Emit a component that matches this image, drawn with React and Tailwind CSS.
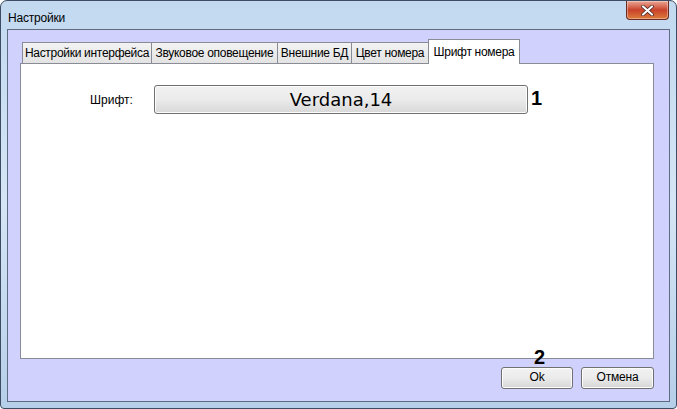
import React from 'react';

const tabs = [
  { label: 'Настройки интерфейса', w: 'w-[130px]' },
  { label: 'Звуковое оповещение', w: 'w-[127px]' },
  { label: 'Внешние БД', w: 'w-[75px]' },
  { label: 'Цвет номера', w: 'w-[78px]' },
];

const font = { fontFamily: '"Liberation Sans", Arial, sans-serif' };

const WinButton = ({ children, w }) => (
  <button
    className={`${w} h-[22px] rounded-[3px] border border-[#707070] bg-gradient-to-b from-[#f2f2f2] via-[#ebebeb] to-[#d6d6d6] text-[12px] text-black leading-none tracking-[-0.2px] shadow-[inset_0_0_0_1px_#fcfcfc] pb-[2px]`}
  >
    {children}
  </button>
);

export default function App() {
  return (
    <div className="w-[677px] h-[409px] overflow-hidden bg-white" style={font}>
      {/* window frame */}
      <div className="w-full h-full rounded-t-[7px] rounded-b-[4px] border border-[#3c4d63] bg-gradient-to-b from-[#c2d9f0] via-[#d5e5f6] to-[#b6cfe9] flex flex-col px-[6px] pb-[6px]">
        {/* title bar */}
        <div className="h-[28px] flex items-start justify-between shrink-0">
          <span className="mt-[8px] ml-[1px] text-[12px] text-black tracking-[-0.2px]">Настройки</span>
          <div className="mr-[1px] w-[43px] h-[19px] rounded-b-[4px] border border-[#6b2a22] border-t-0 bg-gradient-to-b from-[#eaa595] via-[#c8412a] to-[#dc7a3c] flex items-center justify-center shadow-[inset_0_0_0_1px_rgba(255,255,255,0.35)]">
            <svg width="13" height="11" viewBox="0 0 13 11">
              <path d="M2 1.5 L11 9.5 M11 1.5 L2 9.5" stroke="#3a2020" strokeWidth="3.6" strokeLinecap="round" />
              <path d="M2 1.5 L11 9.5 M11 1.5 L2 9.5" stroke="#ffffff" strokeWidth="2.2" strokeLinecap="round" />
            </svg>
          </div>
        </div>

        {/* client area */}
        <div className="flex-1 border border-[#5e6c82] bg-[#d0d1fd] flex flex-col pl-[12px] pr-[15px] pt-[8px]">
          {/* tabs */}
          <div className="flex items-end h-[25px] pl-[2px] shrink-0">
            {tabs.map((t) => (
              <div
                key={t.label}
                className={`${t.w} h-[21px] border border-[#898c95] border-b-0 -mr-px bg-gradient-to-b from-[#f3f3f3] to-[#e3e3e3] flex items-center justify-center text-[12px] tracking-[-0.3px] text-black whitespace-nowrap`}
              >
                {t.label}
              </div>
            ))}
            <div className="w-[92px] h-[25px] border border-[#898c95] border-b-0 bg-white flex items-start justify-center pt-[3px] text-[12px] tracking-[-0.3px] text-black whitespace-nowrap relative z-10 -mb-px">
              Шрифт номера
            </div>
          </div>

          {/* panel */}
          <div className="h-[296px] border border-[#898c95] bg-white shrink-0 pt-[21px]">
            <div className="flex items-center">
              <span className="ml-[69px] w-[64px] text-[12px] text-black">Шрифт:</span>
              <div className="w-[374px] h-[29px] rounded-[3px] border border-[#707070] bg-gradient-to-b from-[#f2f2f2] via-[#ebebeb] to-[#d8d8d8] flex items-center justify-center shadow-[inset_0_0_0_1px_#fcfcfc]">
                <span className="text-[18px] text-black" style={{ fontFamily: '"DejaVu Sans", Verdana, sans-serif' }}>
                  Verdana,14
                </span>
              </div>
              <span className="ml-[3px] -mt-[4px] text-[20px] font-bold text-black">1</span>
            </div>
          </div>

          {/* buttons */}
          <div className="flex justify-end gap-[8px] mt-[8px] relative">
            <span className="absolute right-[109px] -top-[20px] text-[20px] font-bold text-black leading-none">
              2
            </span>
            <WinButton w="w-[72px]">Ok</WinButton>
            <WinButton w="w-[73px]">Отмена</WinButton>
          </div>
        </div>
      </div>
    </div>
  );
}
